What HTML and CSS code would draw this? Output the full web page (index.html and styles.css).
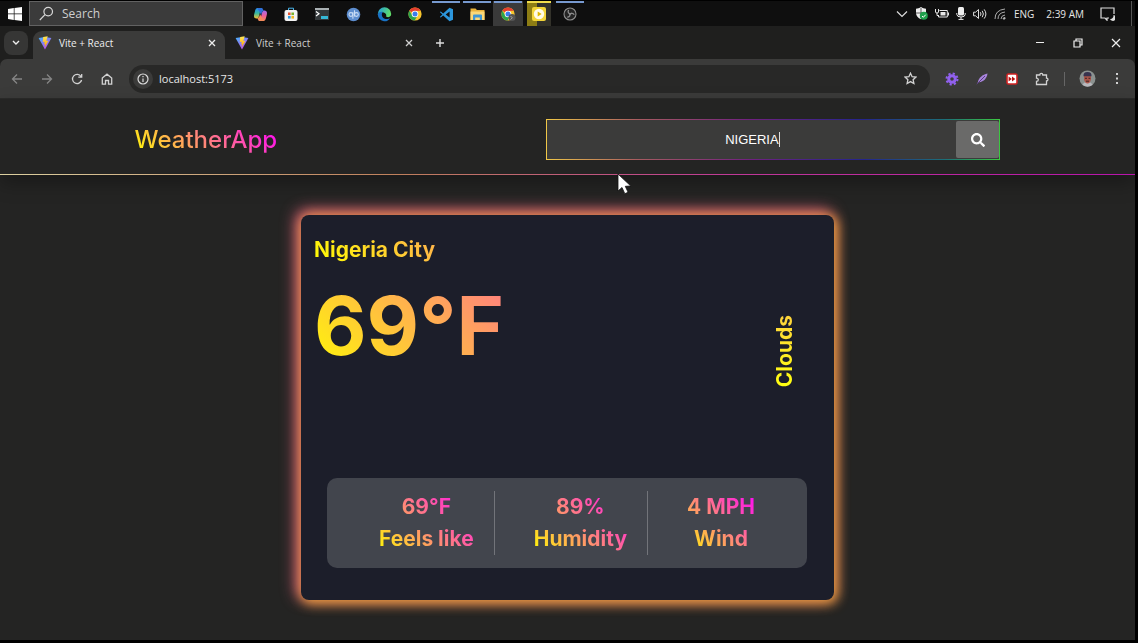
FILE: index.html
```html
<!DOCTYPE html>
<html lang="en">
<head>
<meta charset="utf-8">
<title>Vite + React</title>
<link rel="stylesheet" href="styles.css">
</head>
<body>
<svg class="defs" width="0" height="0" aria-hidden="true">
  <defs>
    <linearGradient id="viteBlue" x1="0" y1="0" x2="0.6" y2="1"><stop offset="0" stop-color="#41b8ff"/><stop offset="1" stop-color="#c04ee8"/></linearGradient>
    <linearGradient id="viteBolt" x1="0" y1="0" x2="0" y2="1"><stop offset="0" stop-color="#ffe95a"/><stop offset="1" stop-color="#ffa200"/></linearGradient>
    <linearGradient id="edgeA" x1="0" y1="0" x2="1" y2="0.3"><stop offset="0" stop-color="#1f9be0"/><stop offset="1" stop-color="#5fdc6a"/></linearGradient>
    <linearGradient id="copA" x1="0" y1="0" x2="0" y2="1"><stop offset="0" stop-color="#2a8cf0"/><stop offset="0.5" stop-color="#35b8a0"/><stop offset="1" stop-color="#f2c230"/></linearGradient>
    <linearGradient id="copB" x1="0" y1="0" x2="0" y2="1"><stop offset="0" stop-color="#a06af0"/><stop offset="0.5" stop-color="#ee5f98"/><stop offset="1" stop-color="#f58a50"/></linearGradient>
    <symbol id="vite" viewBox="0 0 14 14">
      <path d="M.6 2 7 .9 13.4 2 7 13.4z" fill="url(#viteBlue)"/>
      <path d="M9.7.2 5.2 1.1l-.4 5 1.9-.3-.6 2.6 1.2-.3-.5 3.1 3.5-6.5-2 .4z" fill="url(#viteBolt)"/>
    </symbol>
    <symbol id="chrome" viewBox="0 0 14 14">
      <circle cx="7" cy="7" r="6.6" fill="#f7c52c"/>
      <path d="M7 7 1.3 3.7A6.6 6.6 0 0 1 12.7 3.7L7 4z" fill="#e5402f"/>
      <path d="M1.3 3.7A6.6 6.6 0 0 0 6.6 13.6L9.6 8.5 4.4 8.5z" fill="#2da44e"/>
      <circle cx="7" cy="7" r="3.3" fill="#fff"/><circle cx="7" cy="7" r="2.5" fill="#3b7ded"/>
    </symbol>
    <symbol id="close" viewBox="0 0 10 10"><path d="m2 2 6 6m0-6-6 6" fill="none" stroke="currentColor" stroke-width="1.3"/></symbol>
  </defs>
</svg>
<div class="screen">
  <div class="taskbar">
    <button class="start" aria-label="Start"><svg width="14" height="14" viewBox="0 0 14 14" fill="#fff"><path d="M0 2l5.8-.9v5.5H0zM6.5 1 14 0v6.6H6.5zM0 7.3h5.8v5.6L0 12zM6.5 7.3H14V14l-7.5-1z"/></svg></button>
    <label class="os-search">
      <svg width="15" height="15" viewBox="0 0 15 15" fill="none" stroke="#d8d8d8" stroke-width="1.2"><circle cx="9.2" cy="5.6" r="4.3"/><path d="M6 8.7.8 14"/></svg>
      <input type="text" placeholder="Search" aria-label="Search Windows">
    </label>
    <div class="apps">
      <button class="app" aria-label="Copilot"><svg width="15" height="15" viewBox="0 0 15 15"><path d="M4.2 1h4.6C7 3 6.600 8 5.500 10.500 5 11.600 3.800 11.500 2.500 11.200.5 10.600.8 8.500 1.500 6 2.300 3.200 2.500 1.400 4.200 1z" fill="url(#copA)"/><path d="M10.800 14H6.200C8 12 8.400 7 9.500 4.500 10 3.400 11.200 3.500 12.500 3.800c2 .6 1.700 2.700 1 5.200-.8 2.800-1 4.600-2.700 5z" fill="url(#copB)"/><path d="M4.200 1h5l1.600 2.800c-1.800.2-2 2-2.600 4.200z" fill="#2f70d8"/><path d="M10.800 14h-5L4.300 11.300C6.300 11 6.400 9 7 7z" fill="#f08a5a"/></svg></button>
      <button class="app" aria-label="Store"><svg width="14" height="15" viewBox="0 0 14 15"><path d="M4.500 3.500V1.200h5v2.300" fill="none" stroke="#4bb4e8"/><rect x=".5" y="3" width="13" height="11" rx="2" fill="#f3f3f3"/><path d="M4 5.500h2.600v2.600H4z" fill="#e5532f"/><path d="M7.400 5.500H10v2.600H7.400z" fill="#7cb32d"/><path d="M4 9h2.600v2.600H4z" fill="#2a9be0"/><path d="M7.400 9H10v2.600H7.400z" fill="#f2b622"/></svg></button>
      <button class="app" aria-label="Terminal"><svg width="14" height="12" viewBox="0 0 14 12"><path d="M0 0h14v12H0z" fill="#33383b"/><path d="M0 0h14v2H0z" fill="#a9b0b3"/><path d="m1 3.500 3 2.300L1 8" fill="none" stroke="#fff" stroke-width="1.200"/><path d="M6 8h7v3H6z" fill="#35b7d6"/></svg></button>
      <button class="app" aria-label="qBittorrent"><svg width="15" height="15" viewBox="0 0 15 15"><circle cx="7.500" cy="7.500" r="6.800" fill="#5d8dce"/><g fill="none" stroke="#c9dcf5" stroke-width="1.100"><circle cx="4.900" cy="7.500" r="1.900"/><path d="M6.900 5.200v6.500M8.500 3.200v6.300"/><circle cx="10.400" cy="7.500" r="1.900"/></g></svg></button>
      <button class="app" aria-label="Edge"><svg width="15" height="15" viewBox="0 0 15 15"><path d="M.8 7A6.700 6.700 0 0 1 14.200 7c0 2.400-2 3.400-4 3.100-1.400-.2-1.100-.9-.9-1.600C9.600 6 6 4.400 3.400 5.500 2 6 1 7 .8 8z" fill="url(#edgeA)"/><path d="M.8 7.600C1.400 5 4 4.300 6 4.800 4 6.600 4.400 11.300 8.500 12c1.900.3 3.400-.3 4.600-1.100C11.700 13.500 9.500 14.500 7 14.200A6.700 6.700 0 0 1 .8 7.600z" fill="#1972c4"/></svg></button>
      <button class="app" aria-label="Chrome"><svg width="14" height="14"><use href="#chrome"/></svg></button>
      <button class="app open" aria-label="Visual Studio Code"><svg width="15" height="15" viewBox="0 0 15 15"><path d="M10.500.7 14 2.300v10.400l-3.500 1.600L4.200 8.600 1.800 10.500.8 9.900 3.400 7.500.8 5.100l1-.6 2.400 1.900zM10.600 4.400 6.700 7.500l3.900 3.100z" fill="#2c96dc" fill-rule="evenodd"/></svg></button>
      <button class="app open" aria-label="File Explorer"><svg width="15" height="14" viewBox="0 0 15 14"><path d="M.5 1.500h5L7 3h7.500v10H.5z" fill="#e9b33c"/><path d="M.5 4.500h14V13H.5z" fill="#fbd878"/><path d="M3 13V8.500q0-1 1-1h7q1 0 1 1V13H9.800v-2.500H5.200V13z" fill="#3f97d4"/></svg></button>
      <button class="app open active" aria-label="Chrome window"><svg width="15" height="15" viewBox="0 0 15 15"><use href="#chrome" width="14" height="14"/><circle cx="11" cy="10.500" r="3.500" fill="#555"/><path d="m9.500 9 1.800 1.800-1.800 1.800" fill="none" stroke="#aaa"/></svg></button>
      <button class="app open player" aria-label="Media player"><svg width="14" height="14" viewBox="0 0 14 14"><rect width="14" height="14" rx="2" fill="#f2d438"/><circle cx="7" cy="7" r="5.200" fill="#fffbe8"/><path d="m5.700 4.600 3.900 2.400-3.900 2.400z" fill="#e0b800"/></svg></button>
      <button class="app open" aria-label="OBS"><svg width="14" height="14" viewBox="0 0 14 14"><circle cx="7" cy="7" r="6" fill="#242424" stroke="#8d8d8d" stroke-width="1.100"/><g fill="none" stroke="#8d8d8d" stroke-width="1.300"><path d="M7.600 7C5.200 6.700 4.600 4.700 5.600 3"/><path d="M7.600 7C5.200 6.700 4.600 4.700 5.600 3" transform="rotate(120 7 7)"/><path d="M7.600 7C5.200 6.700 4.600 4.700 5.600 3" transform="rotate(240 7 7)"/></g></svg></button>
    </div>
    <div class="tray">
      <svg width="12" height="8" viewBox="0 0 12 8" fill="none" stroke="#ddd" stroke-width="1.200"><path d="m1 1.500 5 5 5-5"/></svg>
      <svg width="13" height="13" viewBox="0 0 13 13"><path d="M6 0c1.700 1.200 3.200 1.600 5 1.700V6c0 3-2.200 5-5 6.200C3.200 11 1 9 1 6V1.700C2.800 1.600 4.300 1.200 6 0z" fill="#eee"/><path d="M6 1v10M1 6h10" stroke="#333" stroke-width=".8"/><circle cx="8.800" cy="8.800" r="4" fill="#1fa04c"/><path d="m7 9 1.300 1.300 2.400-2.600" fill="none" stroke="#fff"/></svg>
      <svg width="14" height="11" viewBox="0 0 14 11" fill="none" stroke="#e8e8e8"><path d="M4.500 2.500h7.800v6.500H3.500V7M13.500 4.500v3"/><path d="M.5 1v3q0 1 1.500 1t1.500-1V1M2 5v2.500h1.500"/><path d="M5.500 4h5v3.500h-5z" fill="#e8e8e8" stroke="none"/></svg>
      <svg width="10" height="13" viewBox="0 0 10 13"><rect x="2" width="6" height="8.500" rx="1.500" fill="#eee"/><path d="M.8 6v1.500Q1 10 5 10t4.200-2.500V6M5 10v2M2.500 12.400h5" fill="none" stroke="#eee"/></svg>
      <svg width="14" height="12" viewBox="0 0 14 12" fill="none" stroke="#ddd"><path d="M.6 4.200h2L5.500 1.500v9L2.600 7.800h-2zM7.300 4.200q1.400 1.800 0 3.600M9.200 2.800q2.400 3.200 0 6.400M11.200 1.400q3.400 4.600 0 9.200"/></svg>
      <svg width="12" height="12" viewBox="0 0 12 12" fill="none" stroke="#aaa"><path d="M1 11Q1 2 11 1M4 11Q4 4.800 11 4M7 11Q7 7.500 11 7" /><path d="M9 11q0-1.500 2-1.500V11z" fill="#ddd"/></svg>
      <span class="lang">ENG</span>
      <time class="clock">2:39 AM</time>
      <svg class="notice" width="15" height="14" viewBox="0 0 15 14" fill="none" stroke="#ddd" stroke-width="1.200"><path d="M9 11H7v2.200L5 11H1V1h13v6"/><path d="M13.500 8a3 3 0 1 1-3.500 4c2 .3 3.700-1.500 3.500-4z" fill="#ddd" stroke="none"/></svg>
      <span class="show-desktop"></span>
    </div>
  </div>

  <div class="tabstrip">
    <button class="tab-menu" aria-label="Search tabs"><svg width="8" height="6" viewBox="0 0 8 6" fill="none" stroke="#eee" stroke-width="1.400"><path d="m1 1 3 3 3-3"/></svg></button>
    <div class="tab current"><svg width="14" height="14"><use href="#vite"/></svg><span class="tab-title">Vite + React</span><button class="tab-close" aria-label="Close tab"><svg width="10" height="10"><use href="#close"/></svg></button></div>
    <div class="tab"><svg width="14" height="14"><use href="#vite"/></svg><span class="tab-title">Vite + React</span><button class="tab-close" aria-label="Close tab"><svg width="10" height="10"><use href="#close"/></svg></button></div>
    <button class="new-tab" aria-label="New tab"><svg width="10" height="10" viewBox="0 0 10 10" stroke="#ddd" stroke-width="1.400"><path d="M5 1v8M1 5h8"/></svg></button>
    <div class="window-controls">
      <button aria-label="Minimize"><svg width="10" height="10" viewBox="0 0 10 10" stroke="#eee"><path d="M1 4.500h8"/></svg></button>
      <button aria-label="Restore"><svg width="10" height="10" viewBox="0 0 10 10" fill="none" stroke="#eee" stroke-width="1.200"><path d="M1 3h6v6H1zM3 3V1h6v6H7"/></svg></button>
      <button aria-label="Close window"><svg width="10" height="10" viewBox="0 0 10 10" stroke="#eee" stroke-width="1.200"><path d="m1 1 8 8m0-8-8 8"/></svg></button>
    </div>
  </div>

  <div class="toolbar">
    <button class="tool dim" aria-label="Back"><svg width="12" height="12" viewBox="0 0 12 12"><path d="M11 6H1.500M6 1.500 1.500 6 6 10.500"/></svg></button>
    <button class="tool dim" aria-label="Forward"><svg width="12" height="12" viewBox="0 0 12 12"><path d="M1 6h9.500M6 1.500 10.500 6 6 10.500"/></svg></button>
    <button class="tool" aria-label="Reload"><svg width="12" height="12" viewBox="0 0 12 12"><path d="M10 3.500A4.600 4.600 0 1 0 10.600 7M10.700 1v3.200H7.300"/></svg></button>
    <button class="tool" aria-label="Home"><svg width="12" height="12" viewBox="0 0 12 12"><path d="M1.300 5 6 1.200 10.700 5v6.200H7.500V7.500h-3v3.700H1.300z"/></svg></button>
    <div class="omnibox">
      <button class="site-info" aria-label="Site information"><svg width="12" height="12" viewBox="0 0 12 12" fill="none" stroke="#ddd" stroke-width="1.200"><circle cx="6" cy="6" r="5"/><path d="M6 5.500V9M6 3v1.300"/></svg></button>
      <input type="text" value="localhost:5173" aria-label="Address">
      <button class="tool" aria-label="Bookmark"><svg width="13" height="13" viewBox="0 0 13 13"><path d="m6.500 1.200 1.600 3.500 3.800.4-2.800 2.600.8 3.800-3.400-1.900-3.400 1.900.8-3.800L1.100 5.100l3.800-.4z"/></svg></button>
    </div>
    <div class="extensions">
      <button class="tool" aria-label="Settings extension"><svg width="14" height="14" viewBox="0 0 14 14"><circle cx="7" cy="7" r="5.500" stroke="#9160ee" stroke-width="2" stroke-dasharray="2.200 2.120"/><circle cx="7" cy="7" r="3.300" stroke="#9160ee" stroke-width="3"/></svg></button>
      <button class="tool" aria-label="Feather extension"><svg width="14" height="14" viewBox="0 0 14 14"><path d="M1.500 12.500 3 10C3.500 6 7.500 2.500 12.500 1.500 12 6 9 9.800 4 10.200z" fill="#a884dc" stroke="none"/><path d="m2 12 8-8" stroke="#5a3f80" stroke-width="1"/></svg></button>
      <button class="tool" aria-label="Fast forward extension"><svg width="12" height="12" viewBox="0 0 12 12"><rect x="1" y="1" width="10" height="10" rx="1.500" fill="#fff" stroke="#d12222" stroke-width="1.600"/><path d="M2.600 3.500 5.800 6 2.600 8.500zM6 3.500 9.300 6 6 8.500z" fill="#b81010" stroke="none"/></svg></button>
      <button class="tool" aria-label="Extensions"><svg width="14" height="14" viewBox="0 0 14 14"><path d="M1.500 3h3.300c0-2.200 3-2.200 3 0h3.700v3.200c2 0 2 2.800 0 2.800v3.500h-10V9.400c2.400 0 2.400-3.200 0-3.200z"/></svg></button>
    </div>
    <span class="divider"></span>
    <button class="tool profile" aria-label="Profile"><svg width="17" height="17" viewBox="0 0 17 17"><circle cx="8.500" cy="8.500" r="8" fill="#8b9290" stroke="none"/><path d="M3.500 15q1-3 5-3t5 3q-5 3.500-10 0z" fill="#b8b8bd" stroke="none"/><path d="M5 5.500h7v4q-1 4-3.500 4T5 9.500z" fill="#a9564a" stroke="none"/><path d="M4.500 6.300Q4 2 8.500 2t4 4.300z" fill="#38334e" stroke="none"/><path d="M6 8.300h2M9.500 8.300h1.800M7 11.200h3" stroke="#442320" stroke-width="1"/></svg></button>
    <button class="tool" aria-label="Menu"><svg width="4" height="13" viewBox="0 0 4 13"><path d="M2 1v2M2 5.500v2M2 10v2" stroke-width="2"/></svg></button>
  </div>

  <main class="page">
    <header class="site-header">
      <a class="brand" href="#">WeatherApp</a>
      <form class="search">
        <div class="field">
          <input class="search-input" type="text" value="NIGERIA" aria-label="City">
          <span class="caret"></span>
        </div>
        <button class="search-button" type="button" aria-label="Search"><svg width="14" height="14" viewBox="0 0 512 512" fill="#fff"><path d="M505 442.700 405.300 343c-4.500-4.500-10.600-7-17-7H372c27.600-35.300 44-79.700 44-128C416 93.100 322.900 0 208 0S0 93.100 0 208s93.100 208 208 208c48.300 0 92.700-16.400 128-44v16.300c0 6.400 2.500 12.500 7 17l99.700 99.700c9.400 9.400 24.600 9.400 33.900 0l28.300-28.300c9.400-9.400 9.400-24.600.1-34zM208 336c-70.700 0-128-57.200-128-128 0-70.700 57.200-128 128-128 70.700 0 128 57.200 128 128 0 70.700-57.200 128-128 128z"/></svg></button>
      </form>
      <svg class="pointer" width="16" height="22" viewBox="0 0 16 22"><path d="M2 1v17l4-3.500 2.800 6.200 3.300-1.400-2.800-6 5.500-.3z" fill="#fff" stroke="#111" stroke-width=".8"/></svg>
    </header>
    <section class="card">
      <div class="overview">
        <div class="reading">
          <h1 class="city">Nigeria City</h1>
          <p class="temperature">69°F</p>
        </div>
        <p class="condition">Clouds</p>
      </div>
      <div class="stats">
        <div class="stat"><span>69°F</span><span>Feels like</span></div>
        <div class="stat"><span>89%</span><span>Humidity</span></div>
        <div class="stat"><span>4 MPH</span><span>Wind</span></div>
      </div>
    </section>
  </main>
</div>
</body>
</html>
```
FILE: styles.css
```css
* { box-sizing: border-box; }
body {
  margin: 0;
  background: #000;
  font-family: "Open Sans", "Noto Sans", sans-serif;
  font-size: 10px;
  color: #e6e6e6;
}
.defs { position: absolute; }
button {
  display: flex;
  align-items: center;
  justify-content: center;
  padding: 0;
  border: 0;
  background: none;
  color: inherit;
}
input {
  min-width: 0;
  border: 0;
  outline: 0;
  background: none;
  font: inherit;
  color: inherit;
}
svg { flex: none; }
p, h1 { margin: 0; }

.screen {
  display: flex;
  flex-direction: column;
  min-height: 100vh;
  padding: 1px 3px 3px 0;
  background: #1f1f1e content-box;
}

/* Taskbar */
.taskbar {
  display: flex;
  height: 25px;
  background: #0f0f0f;
}
.start { width: 29px; }
.os-search {
  display: flex;
  align-items: center;
  gap: 8px;
  width: 214px;
  padding: 0 9px;
  border: 1px solid #626262;
  background: #3b3b3b;
}
.os-search input { flex: 1; padding: 0; font-size: 12px; }
.os-search input::placeholder { color: #cfcfcf; opacity: 1; }
.apps { display: flex; gap: 1px; padding-left: 2px; }
.app { width: 30px; border-top: 2px solid transparent; padding-bottom: 1px; }
.open { border-image: linear-gradient(90deg, transparent 10%, #7799cf 10% 90%, transparent 90%) 2; }
.active { background: #3a3a3a; }
.player {
  border-image: linear-gradient(#f0dc4c, #f0dc4c) 2;
  width: 24px;
  margin: 0 3px;
  background: linear-gradient(90deg, #8d7d14 40%, #33322a 40%);
}
.tray {
  display: flex;
  align-items: center;
  gap: 7px;
  margin-left: auto;
}
.lang { margin-left: 1px; }
.clock { margin-left: 5px; }
.notice { margin: 0 9px; }
.show-desktop { width: 4px; height: 25px; border-left: 1px solid #555; }

/* Browser frame */
.tabstrip {
  display: flex;
  align-items: center;
  height: 33px;
  padding-left: 4px;
}
.tab-menu {
  width: 24px;
  height: 24px;
  border-radius: 8px;
  background: #363635;
}
.tab {
  display: flex;
  align-items: center;
  gap: 7px;
  width: 192px;
  height: 28px;
  margin: 5px 0 0 5px;
  padding: 0 8px 5px 5px;
  border-radius: 9px 9px 0 0;
  color: #cfcfcf;
}
.current { background: #3b3b3a; color: #eee; }
.tab-title { flex: 1; }
.tab-close { width: 10px; height: 10px; }
.new-tab { width: 30px; height: 24px; margin-left: 3px; }
.window-controls { display: flex; margin-left: auto; }
.window-controls button { width: 38px; height: 32px; }
.toolbar {
  display: flex;
  align-items: center;
  height: 39px;
  padding: 0 3px 0 2px;
  background: #3b3b3a;
  border-radius: 7px 7px 0 0;
}
.tool { width: 30px; height: 28px; }
.tool svg { fill: none; stroke: #d2d2d2; stroke-width: 1.3px; }
.dim svg { stroke: #858585; }
.omnibox {
  display: flex;
  flex: 1;
  align-items: center;
  height: 28px;
  margin: 0 7px;
  padding: 0 5px 0 4px;
  border-radius: 14px;
  background: #282827;
}
.site-info { width: 20px; height: 20px; border-radius: 10px; background: #3b3b3a; }
.omnibox input { flex: 1; padding: 0 6px; font-size: 11px; }
.extensions { display: flex; }
.divider { width: 1px; height: 14px; margin: 0 7px; background: #666; }

/* Weather page */
.page {
  flex: 1;
  border-top: 1px solid #2b2b2a;
  background: #242423;
  font-family: Inter, "Liberation Sans", sans-serif;
}
.brand, .city, .temperature, .stat {
  background-image: linear-gradient(45deg, #ffff00, #ff00ff);
  background-clip: text;
  color: transparent;
}
.site-header {
  position: relative;
  display: flex;
  align-items: center;
  justify-content: space-around;
  height: 76px;
  padding: 10px 0 4px;
  border-bottom: 1px solid transparent;
  background:
    linear-gradient(#242423, #242423) padding-box,
    linear-gradient(90deg, #dcd0a0, #c0805c 35%, #c03898 65%, #b814ac) border-box;
  box-shadow: 0 8px 18px rgba(0, 0, 0, 0.3);
}
.brand {
  font-size: 24px;
  font-weight: 500;
  line-height: 32px;
  text-decoration: none;
}
.search {
  display: flex;
  width: 40%;
  height: 41px;
  border: 1px solid transparent;
  background:
    linear-gradient(#3b3b3a, #3b3b3a) padding-box,
    linear-gradient(90deg, #f0c848, #a85c60 20%, #702080 45%, #24248c 70%, #1c7078 88%, #3cc840) border-box;
}
.field { position: relative; display: flex; flex: 1; }
.search-input {
  width: 100%;
  padding: 0;
  font-family: "Liberation Sans", Arial, sans-serif;
  font-size: 13px;
  text-align: center;
  color: #fff;
}
.caret {
  position: absolute;
  top: 12px;
  left: calc(50% + 27px);
  width: 1px;
  height: 15px;
  background: #ddd;
}
.search-button {
  width: 43px;
  margin: 1px 0;
  border-radius: 2px;
  background: #6a6a69;
}
.pointer { position: absolute; top: 74px; left: 616px; }
.card {
  display: flex;
  flex-direction: column;
  justify-content: space-between;
  width: 533px;
  min-height: 385px;
  margin: 40px auto;
  padding: 20px 13px 32px;
  border-radius: 8px;
  background: #1c1e2a;
  box-shadow: 2px 2px 12px 2px #e89a3c, -3px -3px 15px 2px #e0607c;
}
.overview { display: flex; }
.reading { flex: 1; }
.city {
  font-size: 21px;
  font-weight: 700;
  line-height: 30px;
}
.temperature {
  font-size: 81px;
  font-weight: 700;
  line-height: 122px;
}
.condition {
  align-self: flex-end;
  margin-right: 23px;
  font-size: 21px;
  font-weight: 700;
  line-height: 26px;
  writing-mode: vertical-rl;
  transform: rotate(180deg);
  background: linear-gradient(180deg, #ffff10, #ffd43c);
  background-clip: text;
  color: transparent;
}
.stats {
  display: flex;
  justify-content: space-evenly;
  margin: 0 14px 0 13px;
  padding: 13px;
  border-radius: 10px;
  background: #42454d;
}
.stat {
  display: flex;
  flex-direction: column;
  align-items: center;
  padding: 0 20px;
  border-right: 1px solid #72747a;
  background-origin: content-box;
  background-repeat: no-repeat;
  font-size: 21px;
  font-weight: 700;
  line-height: 32px;
}
.stat:last-child { border-right: 0; }
```
